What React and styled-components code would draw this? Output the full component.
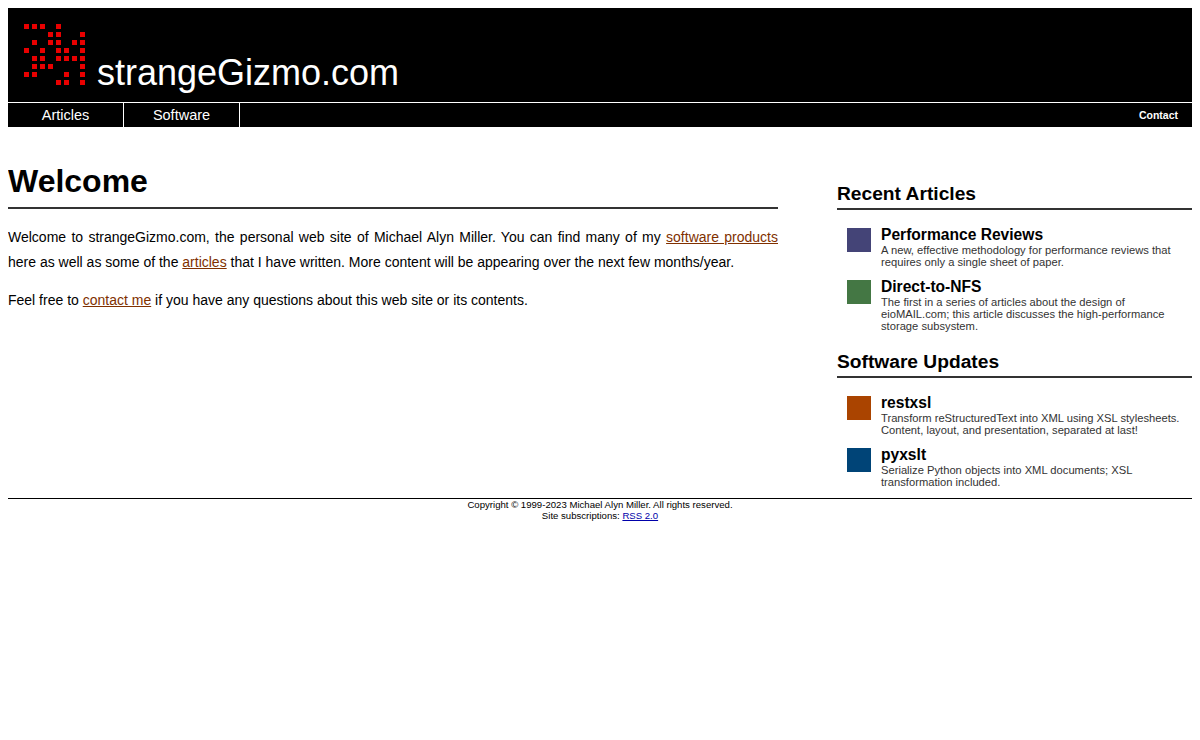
import React from "react";
import styled, { createGlobalStyle } from "styled-components";

const GlobalStyle = createGlobalStyle`
  body {
    margin: 8px;
    background: #fff;
    color: #000;
    font-family: "Liberation Sans", Arial, sans-serif;
  }
`;

const Banner = styled.div`
  display: flex;
  align-items: flex-end;
  height: 94px;
  background: #000;
  border-bottom: 1px solid #fff;
  box-sizing: content-box;
`;

const LogoSvg = styled.svg`
  display: block;
  margin: 16px 0 0 16px;
  align-self: flex-start;
  flex: none;
`;

const SiteName = styled.div`
  margin: 0 0 8px 11px;
  font-size: 36px;
  line-height: 42px;
  color: #fff;
`;

const Nav = styled.div`
  display: flex;
  height: 24px;
  background: #000;
`;

const NavItem = styled.a`
  width: 115px;
  border-right: 1px solid #fff;
  color: #fff;
  font-size: 14.5px;
  line-height: 24px;
  text-align: center;
`;

const NavRight = styled.a`
  margin-left: auto;
  padding-right: 14px;
  color: #fff;
  font-size: 10.5px;
  font-weight: bold;
  line-height: 24px;
`;

const Content = styled.div`
  display: flex;
  justify-content: space-between;
  align-items: flex-start;
  height: 371px;
`;

const Main = styled.div`
  width: 770px;
  padding-top: 35px;
`;

const Title = styled.h1`
  margin: 0;
  padding-bottom: 7px;
  border-bottom: 2px solid #333;
  font-size: 32px;
  line-height: 38px;
`;

const Para = styled.p`
  margin: 0 0 13px;
  font-size: 14px;
  line-height: 25px;
  text-align: justify;

  &:first-of-type {
    margin-top: 16px;
  }
`;

const BodyLink = styled.a`
  color: #803000;
  text-decoration: underline;
`;

const Sidebar = styled.div`
  width: 355px;
  padding-top: 55px;
`;

const SideHeading = styled.h2`
  margin: 0 0 15px;
  padding-bottom: 2px;
  border-bottom: 2px solid #333;
  font-size: 19.2px;
  line-height: 24px;
`;

const SideGroup = styled.div`
  margin-bottom: 18px;
`;

const Item = styled.div`
  display: flex;
  margin: 0 0 9px 10px;
`;

const Swatch = styled.div`
  flex: none;
  width: 24px;
  height: 24px;
  margin: 3px 10px 0 0;
  background: ${({ $color }) => $color};
`;

const ItemTitle = styled.div`
  font-size: 15.6px;
  font-weight: bold;
  line-height: 19px;
`;

const ItemText = styled.div`
  color: #333;
  font-size: 11.2px;
  line-height: 12px;
`;

const Footer = styled.div`
  border-top: 1px solid #000;
  font-size: 9.6px;
  line-height: 11px;
  text-align: center;
`;

const FooterLink = styled.a`
  color: #00a;
  text-decoration: underline;
`;

const logoRows = [
  [0, 1, 2, 4],
  [3, 4, 7],
  [1, 3, 4, 6, 7],
  [0, 2, 4, 5, 7],
  [1, 2, 4, 5, 6, 7],
  [1, 2, 3, 7],
  [0, 1, 5, 7],
  [4, 5, 7],
];

const Logo = () => (
  <LogoSvg width="62" height="62" viewBox="0 0 62 62">
    {logoRows.map((cols, r) =>
      cols.map((c) => (
        <rect key={r + "-" + c} x={c * 8} y={r * 8} width="5" height="5" fill="#e80000" />
      ))
    )}
  </LogoSvg>
);

const App = () => {
  return (
    <>
      <GlobalStyle />
      <Banner>
        <Logo />
        <SiteName>strangeGizmo.com</SiteName>
      </Banner>
      <Nav>
        <NavItem>Articles</NavItem>
        <NavItem>Software</NavItem>
        <NavRight>Contact</NavRight>
      </Nav>
      <Content>
        <Main>
          <Title>Welcome</Title>
          <Para>
            Welcome to strangeGizmo.com, the personal web site of Michael Alyn Miller. You can find many of my{" "}
            <BodyLink>software products</BodyLink> here as well as some of the <BodyLink>articles</BodyLink> that I
            have written. More content will be appearing over the next few months/year.
          </Para>
          <Para>
            Feel free to <BodyLink>contact me</BodyLink> if you have any questions about this web site or its contents.
          </Para>
        </Main>
        <Sidebar>
          <SideGroup>
            <SideHeading>Recent Articles</SideHeading>
            <Item>
              <Swatch $color="#444477" />
              <div>
                <ItemTitle>Performance Reviews</ItemTitle>
                <ItemText>
                  A new, effective methodology for performance reviews that
                  <br />
                  requires only a single sheet of paper.
                </ItemText>
              </div>
            </Item>
            <Item>
              <Swatch $color="#447744" />
              <div>
                <ItemTitle>Direct-to-NFS</ItemTitle>
                <ItemText>
                  The first in a series of articles about the design of
                  <br />
                  eioMAIL.com; this article discusses the high-performance
                  <br />
                  storage subsystem.
                </ItemText>
              </div>
            </Item>
          </SideGroup>
          <SideGroup>
            <SideHeading>Software Updates</SideHeading>
            <Item>
              <Swatch $color="#aa4400" />
              <div>
                <ItemTitle>restxsl</ItemTitle>
                <ItemText>
                  Transform reStructuredText into XML using XSL stylesheets.
                  <br />
                  Content, layout, and presentation, separated at last!
                </ItemText>
              </div>
            </Item>
            <Item>
              <Swatch $color="#004477" />
              <div>
                <ItemTitle>pyxslt</ItemTitle>
                <ItemText>
                  Serialize Python objects into XML documents; XSL
                  <br />
                  transformation included.
                </ItemText>
              </div>
            </Item>
          </SideGroup>
        </Sidebar>
      </Content>
      <Footer>
        Copyright © 1999-2023 Michael Alyn Miller. All rights reserved.
        <br />
        Site subscriptions: <FooterLink>RSS 2.0</FooterLink>
      </Footer>
    </>
  );
};

export default App;
